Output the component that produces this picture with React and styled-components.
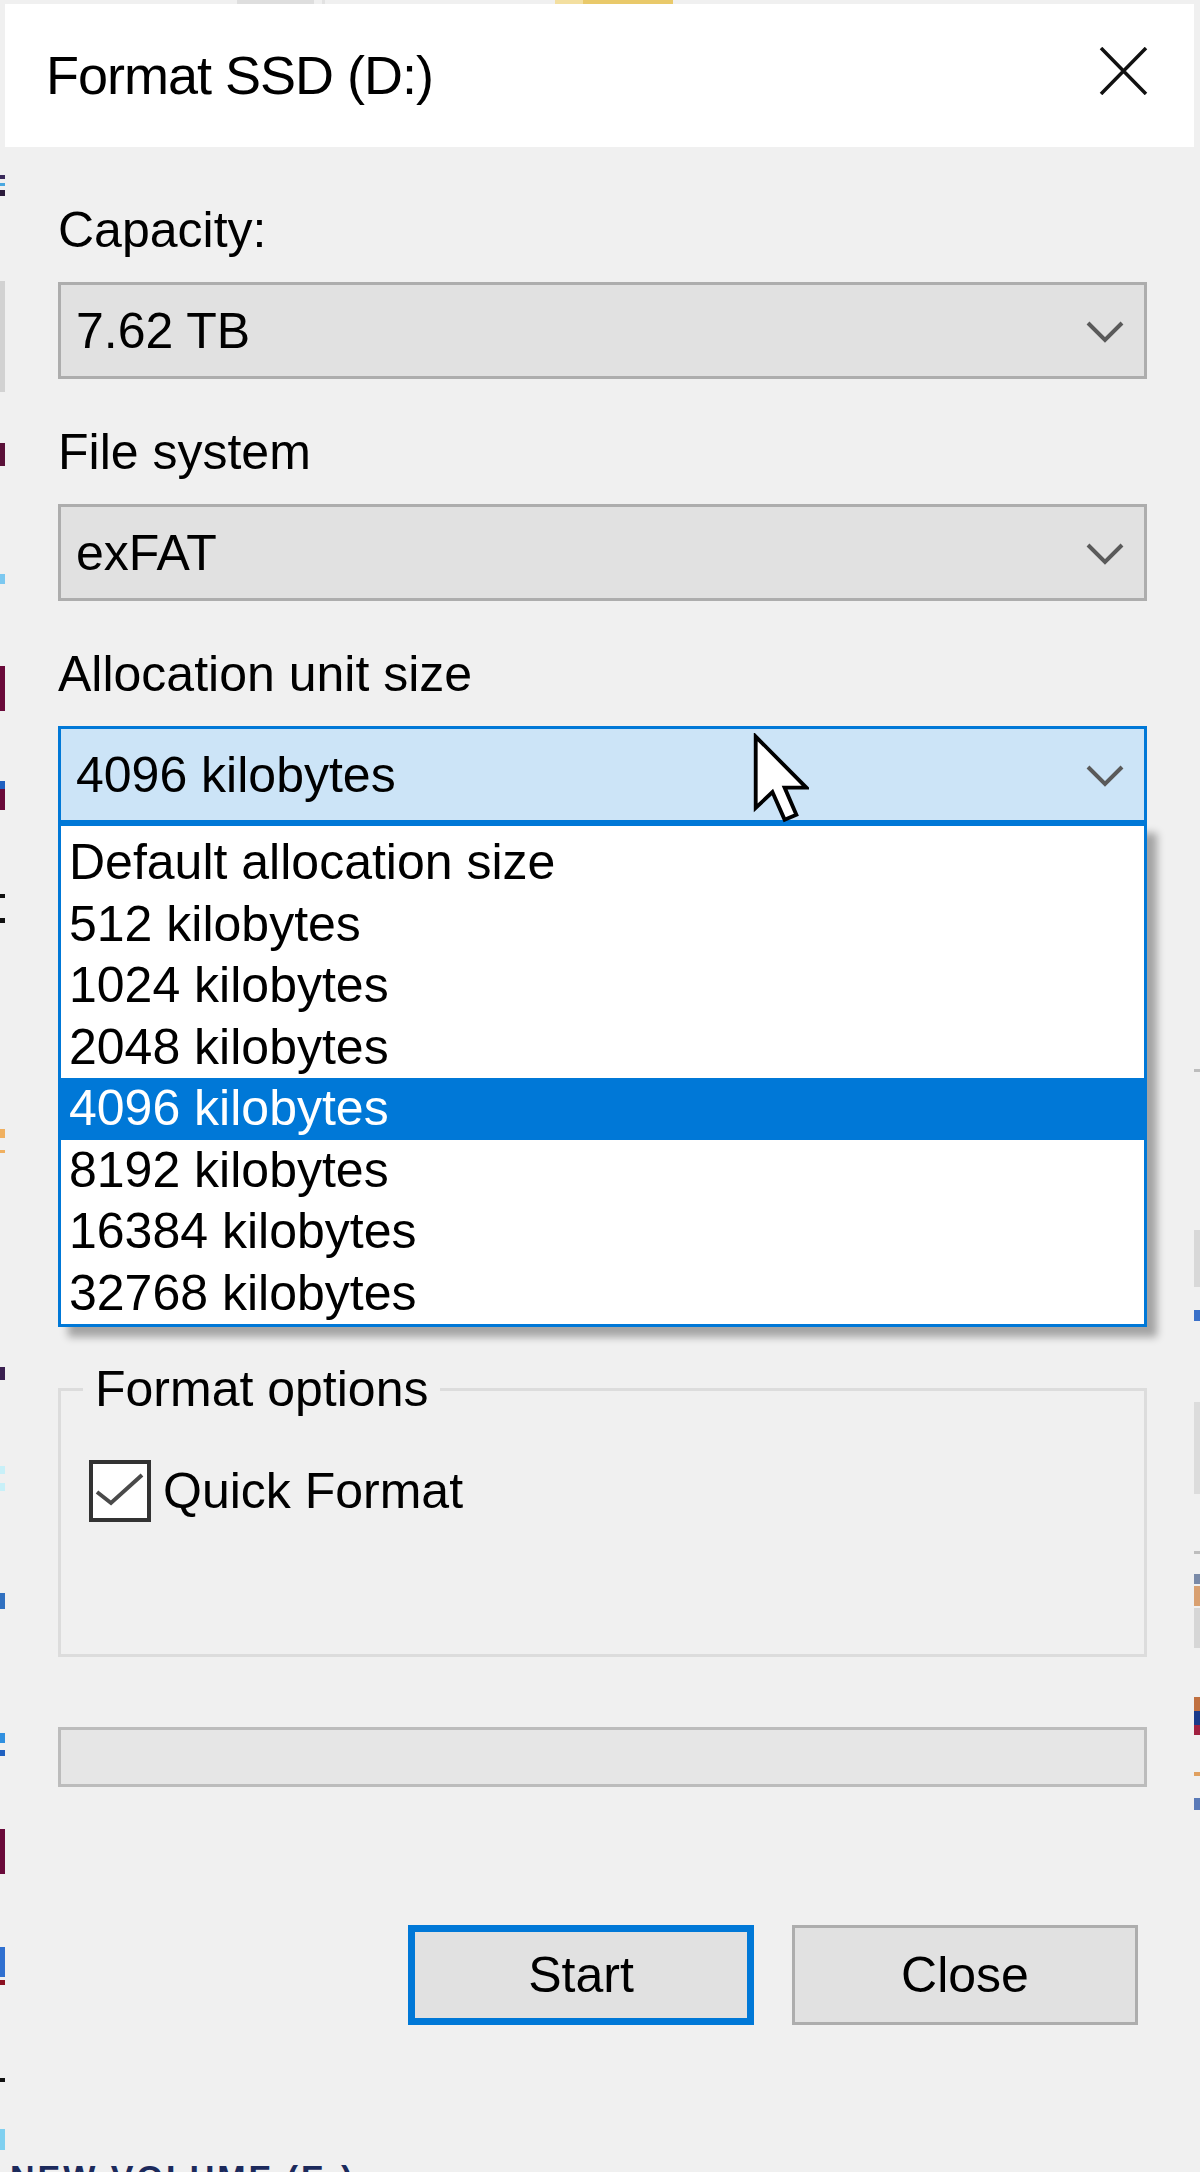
import React from "react";
import styled, { createGlobalStyle } from "styled-components";

const GlobalStyle = createGlobalStyle`
  body {
    margin: 0;
    background: #f0f0f0;
    font-family: "Liberation Sans", Arial, sans-serif;
    color: #000;
  }
`;

// desktop bits peeking out on each side of the dialog: [top, height, colour]
const leftBits = [
  [171, 4, "#3a2a5a"], [179, 3, "#4aa8e0"], [186, 6, "#2a1a3a"],
  [277, 111, "#d2d2d2"],
  [439, 23, "#5a1038"],
  [570, 10, "#7cc8f0"],
  [662, 45, "#6a0a3a"],
  [777, 8, "#2060c0"], [785, 21, "#6a0a3a"],
  [890, 4, "#111"], [914, 5, "#111"],
  [1125, 9, "#f0b060"], [1146, 3, "#f0b060"],
  [1363, 13, "#3a2050"],
  [1462, 8, "#c8f0f8"], [1479, 8, "#c8f0f8"],
  [1589, 16, "#3070c0"],
  [1729, 10, "#3090e0"], [1746, 6, "#2060c0"],
  [1825, 45, "#6a0a3a"],
  [1943, 30, "#3070d0"], [1976, 5, "#8a1020"],
  [2074, 4, "#111"],
  [2125, 21, "#80d0f0"],
];

const rightBits = [
  [1065, 3, "#bdbdbd"],
  [1226, 57, "#d8d8d8"],
  [1306, 11, "#3a70c8"],
  [1398, 92, "#dcdcdc"],
  [1547, 3, "#bdbdbd"],
  [1570, 10, "#7a8aa8"], [1582, 20, "#d9a070"], [1604, 40, "#d6d6d6"],
  [1693, 14, "#c07040"], [1707, 14, "#1a3a8a"], [1721, 10, "#a02040"],
  [1768, 4, "#e0a060"],
  [1794, 12, "#5a7ab8"],
];

const bitsGradient = (bits) =>
  "linear-gradient(to bottom, transparent 0" +
  bits
    .map(([y, h, c]) => `, transparent ${y}px, ${c} ${y}px, ${c} ${y + h}px, transparent ${y + h}px`)
    .join("") +
  ")";

const allocationSizes = [
  "Default allocation size",
  "512 kilobytes",
  "1024 kilobytes",
  "2048 kilobytes",
  "4096 kilobytes",
  "8192 kilobytes",
  "16384 kilobytes",
  "32768 kilobytes",
];

const Page = styled.div`
  width: 1200px;
  height: 2172px;
  overflow: hidden;
  display: flex;
  flex-direction: column;
`;

const TopStrip = styled.div`
  height: 4px;
  flex: none;
  background: linear-gradient(
    to right,
    #f0f0f0 237px,
    #dedede 237px 314px,
    #f0f0f0 314px 322px,
    #e2e2e2 322px 325px,
    #f0f0f0 325px 555px,
    #f3dfa0 555px 583px,
    #e9c96a 583px 673px,
    #f0f0f0 673px
  );
`;

const Middle = styled.div`
  height: 2156px;
  flex: none;
  display: grid;
  grid-template-columns: 5px 1189px 6px;
`;

const Edge = styled.div`
  background: ${({ $bg }) => $bg};
`;

const Dialog = styled.div`
  display: flex;
  flex-direction: column;
  background: #f0f0f0;
`;

const TitleBar = styled.div`
  height: 143px;
  background: #fff;
  display: flex;
  align-items: center;
  justify-content: space-between;
  padding: 0 46px 0 41px;
`;

const Title = styled.div`
  font-size: 54px;
  letter-spacing: -1px;
  line-height: 1.15;
`;

const CloseIcon = styled.svg`
  width: 49px;
  height: 48px;
  margin-bottom: 9px;
`;

const Body = styled.div`
  display: flex;
  flex-direction: column;
  padding: 54px 47px 0 53px;
`;

const Fields = styled.div`
  display: flex;
  flex-direction: column;
  gap: 44px;
`;

const Field = styled.div`
  display: flex;
  flex-direction: column;
  gap: 23px;
`;

const Label = styled.div`
  font-size: 50px;
  line-height: 58px;
`;

const Combo = styled.div`
  position: relative;
  box-sizing: border-box;
  height: 97px;
  display: flex;
  align-items: center;
  justify-content: space-between;
  padding: 0 19px 0 15px;
  font-size: 50px;
  border: 3px solid ${({ $active }) => ($active ? "#0078d7" : "#adadad")};
  background: ${({ $active }) => ($active ? "#cce4f7" : "#e1e1e1")};
`;

const Chevron = styled.svg`
  width: 40px;
  height: 24px;
  flex: none;
`;

const DropList = styled.div`
  position: absolute;
  z-index: 2;
  top: calc(100% + 3px);
  left: -3px;
  right: -3px;
  border: 3px solid #0078d7;
  background: #fff;
  padding-top: 6px;
  box-shadow: 10px 10px 8px rgba(0, 0, 0, 0.32);
`;

const Option = styled.div`
  height: 61.5px;
  line-height: 61.5px;
  padding-left: 8px;
  font-size: 50px;
  white-space: nowrap;
  background: ${({ $selected }) => ($selected ? "#0078d7" : "transparent")};
  color: ${({ $selected }) => ($selected ? "#fff" : "#000")};
`;

const Cursor = styled.svg`
  position: absolute;
  z-index: 3;
  left: 692px;
  top: 4px;
  width: 56px;
  height: 92px;
`;

const Group = styled.fieldset`
  margin: 537px 0 0;
  padding: 42px 0 132px 28px;
  border: 3px solid #dcdcdc;
  min-width: 0;
`;

const Legend = styled.legend`
  padding: 0 12px;
  margin-left: -6px;
  font-size: 50px;
  line-height: 58px;
`;

const CheckRow = styled.label`
  display: flex;
  align-items: center;
  gap: 12px;
  font-size: 50px;
  line-height: 58px;
`;

const CheckBox = styled.span`
  box-sizing: border-box;
  width: 62px;
  height: 62px;
  flex: none;
  border: 4px solid #333;
  background: #fff;
  display: flex;
`;

const Progress = styled.div`
  margin-top: 70px;
  height: 60px;
  box-sizing: border-box;
  border: 3px solid #bcbcbc;
  background: #e6e6e6;
`;

const Buttons = styled.div`
  margin-top: 138px;
  display: flex;
  justify-content: flex-end;
  gap: 38px;
  padding-right: 9px;
`;

const Button = styled.button`
  width: 346px;
  height: 100px;
  box-sizing: border-box;
  background: #e1e1e1;
  border: ${({ $primary }) => ($primary ? "7px solid #0078d7" : "3px solid #adadad")};
  font-family: "Liberation Sans", Arial, sans-serif;
  font-size: 50px;
  color: #000;
  padding: 0;
`;

const Footer = styled.div`
  flex: 1;
  overflow: hidden;
  padding-left: 10px;
  font-size: 34px;
  font-weight: bold;
  line-height: 1;
  letter-spacing: 3px;
  color: #1c2a5c;
  white-space: nowrap;
`;

function ComboArrow() {
  return (
    <Chevron viewBox="0 0 40 24">
      <path d="M3 4 L20 21 L37 4" fill="none" stroke="#5a5a5a" strokeWidth="4" />
    </Chevron>
  );
}

function Select({ value, active, children }) {
  return (
    <Combo $active={active}>
      <span>{value}</span>
      <ComboArrow />
      {children}
    </Combo>
  );
}

export default function App() {
  const selected = "4096 kilobytes";
  return (
    <>
      <GlobalStyle />
      <Page>
        <TopStrip />
        <Middle>
          <Edge $bg={bitsGradient(leftBits)} />
          <Dialog>
            <TitleBar>
              <Title>Format SSD (D:)</Title>
              <CloseIcon viewBox="0 0 49 48">
                <path d="M2 1 L47 47 M47 1 L2 47" stroke="#111" strokeWidth="3.5" />
              </CloseIcon>
            </TitleBar>
            <Body>
              <Fields>
                <Field>
                  <Label>Capacity:</Label>
                  <Select value="7.62 TB" />
                </Field>
                <Field>
                  <Label>File system</Label>
                  <Select value="exFAT" />
                </Field>
                <Field>
                  <Label>Allocation unit size</Label>
                  <Select value={selected} active>
                    <Cursor viewBox="0 0 12.4 20">
                      <path
                        d="M0.6 0.6 L0.6 16.4 L4.3 12.9 L7 19 L9.6 17.9 L7 11.9 L11.8 11.9 Z"
                        fill="#fff"
                        stroke="#000"
                        strokeWidth="0.85"
                        strokeLinejoin="miter"
                      />
                    </Cursor>
                    <DropList>
                      {allocationSizes.map((size) => (
                        <Option key={size} $selected={size === selected}>
                          {size}
                        </Option>
                      ))}
                    </DropList>
                  </Select>
                </Field>
              </Fields>

              <Group>
                <Legend>Format options</Legend>
                <CheckRow>
                  <CheckBox>
                    <svg width="54" height="54" viewBox="0 0 54 54">
                      <path d="M4 28 L18 39 L49 11" fill="none" stroke="#4a4a4a" strokeWidth="4" />
                    </svg>
                  </CheckBox>
                  Quick Format
                </CheckRow>
              </Group>

              <Progress />

              <Buttons>
                <Button $primary>Start</Button>
                <Button>Close</Button>
              </Buttons>
            </Body>
          </Dialog>
          <Edge $bg={bitsGradient(rightBits)} />
        </Middle>
        <Footer>NEW VOLUME (E:)</Footer>
      </Page>
    </>
  );
}
